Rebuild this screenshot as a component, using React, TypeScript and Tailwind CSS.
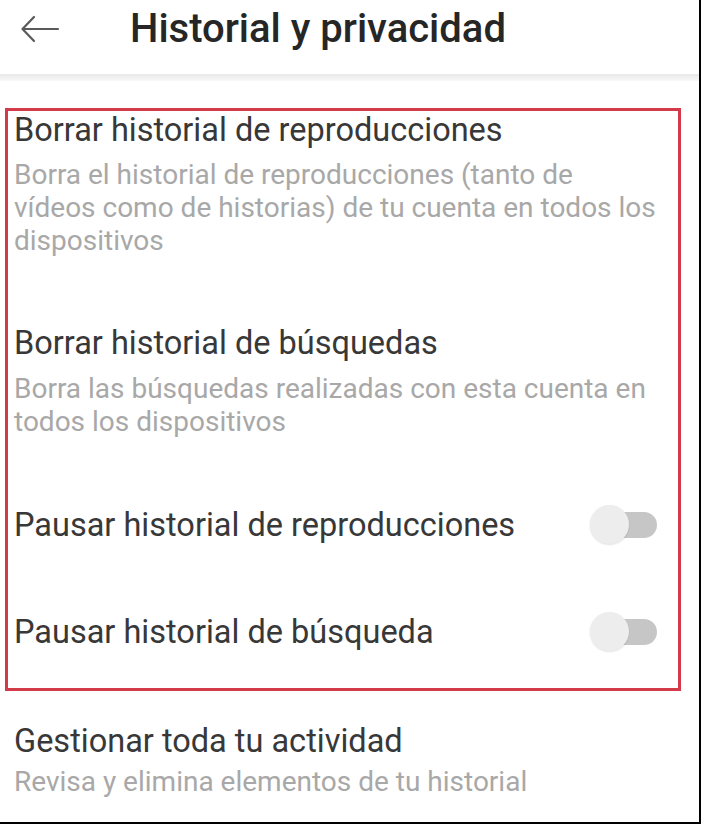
function Toggle() {
  return (
    <div className="relative h-[40px] w-[67px] shrink-0">
      <div className="absolute right-0 top-[7px] h-[26px] w-[50px] rounded-full bg-[#c6c6c6]" />
      <div className="absolute left-0 top-0 h-[39px] w-[39px] rounded-full bg-[#ededed] shadow-[0_1px_2px_rgba(0,0,0,0.12)]" />
    </div>
  )
}

const titleCls = 'text-[32.5px] leading-[38px] text-[#383838]'
const descCls = 'text-[28px] leading-[33px] text-[#a8a8a8]'

export default function App() {
  return (
    <div
      className="h-[824px] w-[701px] overflow-hidden border-b-[2px] border-r-[2px] border-black bg-white"
      style={{ fontFamily: 'Roboto, "Noto Sans", sans-serif' }}
    >
      {/* Header */}
      <div className="flex h-[74px] items-start pt-[5px]">
        <div className="flex w-[130px] pl-[20px] pt-[4px]">
          <svg width="40" height="40" viewBox="0 0 40 40" fill="none" stroke="#5a5a5a" strokeWidth="2.2" strokeLinecap="round" strokeLinejoin="round">
            <path d="M38 20H3" />
            <path d="M14 8L2.5 20L14 32" />
          </svg>
        </div>
        <h1 className="text-[40px] font-medium leading-[48px] text-[#262626]">Historial y privacidad</h1>
      </div>
      <div className="h-[7px] bg-linear-to-b from-[#e9e9e9] to-[#f8f8f8]" />

      <div className="pt-[27px]">
        <div className="ml-[5px] w-[676px] border-[3px] border-[#d33b4b] pb-[37px] pl-[6px] pr-[6px]">
          <div>
            <div className={titleCls}>Borrar historial de reproducciones</div>
            <div className={`mt-[9px] ${descCls}`}>
              Borra el historial de reproducciones (tanto de
              <br />
              vídeos como de historias) de tu cuenta en todos los dispositivos
            </div>
          </div>

          <div className="mt-[67px]">
            <div className={titleCls}>Borrar historial de búsquedas</div>
            <div className={`mt-[10px] ${descCls}`}>
              Borra las búsquedas realizadas con esta cuenta en todos los dispositivos
            </div>
          </div>

          <div className="mt-[68px] flex h-[38px] items-center justify-between pr-[15px]">
            <div className={titleCls}>Pausar historial de reproducciones</div>
            <Toggle />
          </div>

          <div className="mt-[69px] flex h-[38px] items-center justify-between pr-[15px]">
            <div className={titleCls}>Pausar historial de búsqueda</div>
            <Toggle />
          </div>
        </div>

        <div className="pl-[14px] pt-[31px]">
          <div className={titleCls}>Gestionar toda tu actividad</div>
          <div className={`mt-[5px] ${descCls}`}>Revisa y elimina elementos de tu historial</div>
        </div>
      </div>
    </div>
  )
}
